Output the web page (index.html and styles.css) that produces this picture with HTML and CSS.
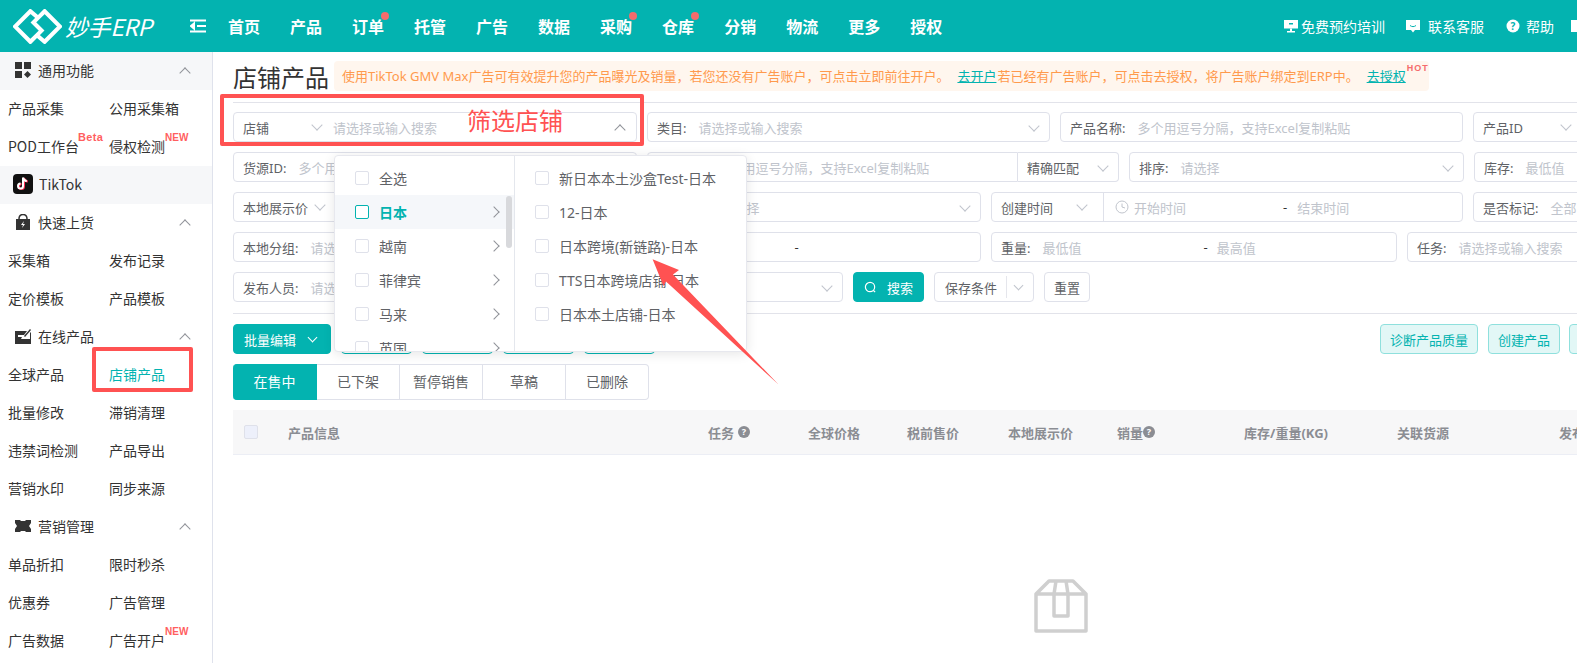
FILE: index.html
```html
<!DOCTYPE html>
<html lang="zh">
<head>
<meta charset="utf-8">
<title>店铺产品</title>
<link rel="stylesheet" href="styles.css">
</head>
<body>
<div class="app">
  <header class="topbar">
    <div class="logo">
      <svg class="logo-mark" viewBox="0 0 48 34"><path d="M24 8 17 2 2 17l15 15 11-11-5-5M24 26l7 6 15-15L31 2 20 13l5 5" fill="none" stroke="#fff" stroke-width="4"/></svg>
      <span class="logo-text">妙手ERP</span>
    </div>
    <svg class="fold" viewBox="0 0 16 14"><path d="M0 1.500h16M7 7h9M0 12.500h16M4 4.500 1 7l3 2.500z" stroke="#fff" stroke-width="2" fill="#fff"/></svg>
    <nav class="nav">
      <a>首页</a><a>产品</a><a class="dot">订单</a><a>托管</a><a>广告</a><a>数据</a><a class="dot">采购</a><a class="dot">仓库</a><a>分销</a><a>物流</a><a>更多</a><a>授权</a>
    </nav>
    <div class="top-links">
      <a class="l1"><svg class="ti" viewBox="0 0 14 14"><path d="M0 1h14v8.500H0z" fill="#fff"/><path d="M5 4h4v1.500H5z" fill="#03b3b0"/><path d="M6 9.500h2V12h3v1.500H3V12h3z" fill="#fff"/></svg>免费预约培训</a>
      <a class="l2"><svg class="ti" viewBox="0 0 14 14"><path d="M0 1h14v10H9l-2 2.500L5 11H0z" fill="#fff"/><path d="M4 6.500c2 1.500 4 1.500 6 0" stroke="#03b3b0" fill="none"/></svg>联系客服</a>
      <a class="l3"><svg class="ti" viewBox="0 0 14 14"><circle cx="7" cy="7" r="6.500" fill="#fff"/><text x="7" y="10.500" class="ti-q">?</text></svg>帮助</a>
      <a class="l4"><svg class="ti" viewBox="0 0 14 14"><path d="M0 1h14v12H0z" fill="#fff"/></svg></a>
    </div>
  </header>
  <div class="body">
    <aside class="side">
      <div class="sec gray"><svg class="si" viewBox="0 0 16 16"><path d="M0 0h7v7H0zM9 0h7v7H9zM0 9h7v7H0z" fill="#333"/><path d="m12.500 9 3.500 3.500-3.500 3.500L9 12.500z" fill="#333"/></svg><b>通用功能</b><i class="up"></i></div>
      <div class="grid"><a>产品采集</a><a>公用采集箱</a><a>POD工作台<em class="beta">Beta</em></a><a>侵权检测<em class="new">NEW</em></a></div>
      <div class="sec gray"><svg class="si tk" viewBox="0 0 20 20"><rect width="20" height="20" rx="4" fill="#111"/><path d="M11 4v8.500a2.500 2.500 0 1 1-2.500-2.500M11 4c.3 2 1.700 3.300 3.800 3.500" fill="none" stroke="#ff2d55" stroke-width="2"/><path d="M10 3.500V12a2.500 2.500 0 1 1-2.500-2.500M10 3.500c.3 2 1.700 3.300 3.800 3.500" fill="none" stroke="#fff" stroke-width="2"/></svg><b>TikTok</b></div>
      <div class="sec"><svg class="si" viewBox="0 0 16 16"><path d="M1 5h14v11H1z" fill="#333"/><path d="M4 5c0-6 8-6 8 0" fill="none" stroke="#333" stroke-width="1.500"/><path d="M9 7 6 11h2l-1 3 3-4H8z" fill="#fff"/></svg><b>快速上货</b><i class="up"></i></div>
      <div class="grid"><a>采集箱</a><a>发布记录</a><a>定价模板</a><a>产品模板</a></div>
      <div class="sec"><svg class="si" viewBox="0 0 16 16"><path d="M0 3h12L9 7H3v2h4l-1 2h9V5l1-1v12H0z" fill="#333"/><path d="m9 8 6-7 1 1-6 7z" fill="#333"/></svg><b>在线产品</b><i class="up"></i></div>
      <div class="grid"><a>全球产品</a><a class="on">店铺产品</a><a>批量修改</a><a>滞销清理</a><a>违禁词检测</a><a>产品导出</a><a>营销水印</a><a>同步来源</a></div>
      <div class="sec"><svg class="si" viewBox="0 0 16 12"><path d="M0 0h5l1 1h4l1-1h5v3l-2 3 2 3v3h-5l-1-1H6l-1 1H0V9l2-3-2-3z" fill="#333"/></svg><b>营销管理</b><i class="up"></i></div>
      <div class="grid"><a>单品折扣</a><a>限时秒杀</a><a>优惠券</a><a>广告管理</a><a>广告数据</a><a>广告开户<em class="new">NEW</em></a></div>
    </aside>
    <main class="main">
      <div class="head">
        <h1>店铺产品</h1>
        <div class="notice">使用TikTok GMV Max广告可有效提升您的产品曝光及销量，若您还没有广告账户，可点击立即前往开户。<a>去开户</a><span class="n2">若已经有广告账户，可点击去授权，将广告账户绑定到ERP中。</span><a>去授权<em class="hot">HOT</em></a></div>
      </div>
      <div class="filters">
        <div class="row">
          <div class="f w404"><span class="lb">店铺</span><i class="dn at83"></i><span class="ph at101">请选择或输入搜索</span><i class="up end"></i></div>
          <div class="f w403"><span class="lb">类目:</span><span class="ph">请选择或输入搜索</span><i class="dn end"></i></div>
          <div class="f w403"><span class="lb">产品名称:</span><span class="ph">多个用逗号分隔，支持Excel复制粘贴</span></div>
          <div class="f w200"><span class="lb">产品ID</span><i class="dn at83 idc"></i></div>
        </div>
        <div class="row">
          <div class="f w404"><span class="lb">货源ID:</span><span class="ph">多个用逗号分隔，支持Excel复制粘贴</span></div>
          <div class="f w370"><span class="lb wide2">SKU ID:</span><span class="ph">多个用逗号分隔，支持Excel复制粘贴</span></div>
          <div class="f joined w101"><span class="lb">精确匹配</span><i class="dn end"></i></div>
          <div class="f w335"><span class="lb">排序:</span><span class="ph">请选择</span><i class="dn end"></i></div>
          <div class="f w200"><span class="lb">库存:</span><span class="ph">最低值</span></div>
        </div>
        <div class="row">
          <div class="f w404"><span class="lb">本地展示价</span><i class="dn at83 thin"></i></div>
          <div class="f w333"><span class="lb wide9">负责人:</span><span class="ph">请选择</span><i class="dn end"></i></div>
          <div class="f w472"><span class="lb">创建时间</span><i class="dn at83 tm"></i><span class="vr"></span><svg class="clock" viewBox="0 0 14 14"><circle cx="7" cy="7" r="6" fill="none" stroke="#c0c4cc"/><path d="M7 3.500V7l3 1" fill="none" stroke="#c0c4cc"/></svg><span class="ph">开始时间</span><span class="dash d1">-</span><span class="ph">结束时间</span></div>
          <div class="f w200"><span class="lb">是否标记:</span><span class="ph">全部</span></div>
        </div>
        <div class="row">
          <div class="f w404"><span class="lb">本地分组:</span><span class="ph">请选择</span></div>
          <div class="f w333"><span class="lb">价格:</span><span class="ph">最低值</span><span class="dash d2">-</span></div>
          <div class="f w406"><span class="lb">重量:</span><span class="ph">最低值</span><span class="dash d3">-</span><span class="ph">最高值</span></div>
          <div class="f w300"><span class="lb">任务:</span><span class="ph">请选择或输入搜索</span></div>
        </div>
        <div class="row">
          <div class="f w404"><span class="lb">发布人员:</span><span class="ph">请选择</span></div>
          <div class="f w196"><span class="lb">来源:</span><i class="dn end"></i></div>
          <button class="btn pri search"><svg class="sic" viewBox="0 0 14 14"><circle cx="6.500" cy="6.500" r="5" fill="none" stroke="#fff" stroke-width="1.300"/><path d="m10 10 2 2" stroke="#fff" stroke-width="1.300"/></svg>搜索</button>
          <button class="btn save">保存条件<span class="vr2"></span><i class="dn small"></i></button>
          <button class="btn reset">重置</button>
        </div>
      </div>
      <div class="toolbar">
        <button class="btn pri batch">批量编辑<i class="dn white"></i></button>
        <button class="btn t1">批量上架</button><button class="btn t1">批量下架</button><button class="btn t1">批量删除</button><button class="btn t1">批量同步</button>
        <span class="spring"></span>
        <button class="btn tint">诊断产品质量</button>
        <button class="btn tint">创建产品</button>
        <button class="btn tint">同步产品</button>
      </div>
      <div class="tabs"><a class="act">在售中</a><a>已下架</a><a>暂停销售</a><a>草稿</a><a>已删除</a></div>
      <div class="thead">
        <span class="cb c0"></span>
        <span class="c c1">产品信息</span>
        <span class="c c2">任务<i class="q"></i></span>
        <span class="c c3">全球价格</span>
        <span class="c c4">税前售价</span>
        <span class="c c5">本地展示价</span>
        <span class="c c6">销量<i class="q n"></i></span>
        <span class="c c7">库存/重量(KG)</span>
        <span class="c c8">关联货源</span>
        <span class="c c9">发布时间</span>
      </div>
      <div class="empty"><svg viewBox="0 0 54 54" class="box"><path d="M2 15 15 2h24l13 13v37H2zM2 15h50M22 2l-2 13v22h14V15L32 2" fill="none" stroke="#cfcfcf" stroke-width="3.500" stroke-linejoin="round"/></svg></div>

      <div class="drop">
        <div class="dcol left">
          <div class="di"><span class="cb"></span>全选</div>
          <div class="di act"><span class="cb teal"></span>日本<i class="rt"></i></div>
          <div class="di"><span class="cb"></span>越南<i class="rt"></i></div>
          <div class="di"><span class="cb"></span>菲律宾<i class="rt"></i></div>
          <div class="di"><span class="cb"></span>马来<i class="rt"></i></div>
          <div class="di"><span class="cb"></span>英国<i class="rt"></i></div>
          <span class="thumb"></span>
        </div>
        <div class="dcol">
          <div class="di"><span class="cb"></span>新日本本土沙盒Test-日本</div>
          <div class="di"><span class="cb"></span>12-日本</div>
          <div class="di"><span class="cb"></span>日本跨境(新链路)-日本</div>
          <div class="di"><span class="cb"></span>TTS日本跨境店铺-日本</div>
          <div class="di"><span class="cb"></span>日本本土店铺-日本</div>
        </div>
      </div>
    </main>
  </div>
</div>
<div class="mark m1"><span>筛选店铺</span></div>
<div class="mark m2"></div>
<svg class="arrow" viewBox="0 0 130 130"><path d="M2.600 2.300 29 13 23 17.500 128.500 127.500 16 24.500 13.500 29z" fill="#ff5252"/></svg>
</body>
</html>
```

FILE: styles.css
```css
* { box-sizing: border-box; }
html, body { margin: 0; height: 100%; overflow: hidden; background: #fff; }
body { font-family: "Noto Sans", "Noto Sans CJK SC", sans-serif; font-size: 13px; color: #606266; position: relative; }
i, em { font-style: normal; }
.app { width: 1577px; height: 663px; display: flex; flex-direction: column; }

.topbar { height: 52px; flex: none; background: #03b3b0; color: #fff; display: flex; align-items: center; padding-left: 13px; }
.logo { display: flex; align-items: center; width: 177px; flex: none; }
.logo-mark { width: 49px; height: 35px; flex: none; }
.logo-text { font-size: 23px; font-style: italic; font-family: "Noto Sans CJK SC", sans-serif; font-weight: 400; margin-left: 3px; line-height: 1; white-space: nowrap; letter-spacing: -.4px; }
.fold { width: 16px; height: 14px; flex: none; }
.nav { display: flex; margin-left: 22px; font-size: 16px; font-weight: 700; }
.nav a { margin-right: 30px; position: relative; line-height: 22px; font-family: "Noto Sans CJK SC", sans-serif; white-space: nowrap; }
.nav a.dot::after { content: ""; position: absolute; width: 8px; height: 8px; border-radius: 50%; background: #f56c6c; right: -5px; top: -3px; }
.top-links { margin-left: auto; display: flex; align-items: center; font-size: 14px; white-space: nowrap; }
.top-links a { display: flex; align-items: center; }
.ti { width: 14px; height: 14px; flex: none; }
.ti-q { font-size: 10px; font-weight: 700; fill: #03b3b0; text-anchor: middle; }
.l1 .ti { margin-right: 3px; }
.l2 { margin-left: 21px; }
.l2 .ti { margin-right: 8px; }
.l3 { margin-left: 22px; }
.l3 .ti { margin-right: 6px; }
.l4 { margin-left: 17px; margin-right: -8px; }

.body { flex: 1; display: flex; min-height: 0; }
.side { width: 213px; flex: none; border-right: 1px solid #dfe2ec; background: #fff; overflow: hidden; color: #333; font-size: 14px; }
.sec { height: 38px; display: flex; align-items: center; padding: 0 0 2px 15px; font-family: "Noto Sans CJK SC", sans-serif; color: #333; }
.sec.gray { background: #f6f7f9; }
.sec b { font-weight: 400; margin-left: 7px; }
.si { width: 16px; height: 16px; flex: none; }
.si.tk { width: 20px; height: 20px; margin-left: -2px; margin-right: -1px; }
.up, .dn { display: block; width: 8px; height: 8px; border-left: 1px solid #909399; border-top: 1px solid #909399; transform: rotate(45deg); flex: none; }
.dn { transform: rotate(225deg); border-color: #c0c4cc; }
.sec .up { margin-left: auto; margin-right: 23px; margin-top: 6px; }
.grid { display: grid; grid-template-columns: 101px 101px; padding-left: 8px; }
.grid a { height: 38px; line-height: 36px; position: relative; white-space: nowrap; font-family: "Noto Sans CJK SC", sans-serif; justify-self: start; }
.grid a.on { color: #03b3b0; }
.beta, .new { position: absolute; color: #ff5f5f; font-weight: 700; left: 100%; line-height: 1; white-space: nowrap; font-family: "Liberation Sans", sans-serif; }
.beta { font-size: 11px; top: 4px; margin-left: -1px; letter-spacing: .4px; }
.new { font-size: 10px; top: 5px; }

.main { flex: 1; min-width: 0; padding-left: 20px; position: relative; overflow: hidden; }
.head { height: 51px; display: flex; align-items: center; border-bottom: 1px solid #e2e3ea; white-space: nowrap; margin-bottom: 9px; }
.head h1 { font-size: 24px; font-weight: 400; margin: 0; color: #333; line-height: 28px; width: 101px; flex: none; font-family: "Noto Sans CJK SC", sans-serif; }
.notice { height: 30px; line-height: 30px; background: #fff6ee; color: #ff9a4d; border-radius: 4px; padding: 0 23px 0 8px; font-size: 13px; width: 1095px; flex: none; position: relative; top: -1px; }
.notice a { color: #03b3b0; text-decoration: underline; margin-left: 8px; position: relative; }
.n2 { margin-left: 1px; }
.hot { position: absolute; left: 100%; top: -3px; font-size: 9px; line-height: 1; font-weight: 700; color: #f56c6c; margin-left: 1px; display: inline-block; font-family: "Liberation Sans", sans-serif; letter-spacing: 1px; }

.filters { border-bottom: 1px solid #e2e3ea; padding-bottom: 11px; display: flex; flex-direction: column; gap: 10px; }
.row { display: flex; gap: 10px; height: 30px; white-space: nowrap; }
.f { height: 30px; border: 1px solid #dfe1ea; border-radius: 4px; display: flex; align-items: center; padding: 0 9px; flex: none; background: #fff; position: relative; overflow: hidden; }
.lb { color: #606266; margin-right: 12px; }
.wide2 { margin-right: 14px; }
.wide9 { margin-right: 21px; }
.ph { color: #c0c4cc; }
.end { margin-left: auto; margin-right: 2px; margin-top: -2px; }
.up.end { margin-top: 5px; margin-right: 3px; }
.at83 { position: absolute; left: 79px; top: 8px; }
.at83.thin { left: 82px; }
.at83.tm { left: 86px; }
.at83.idc { left: 88px; }
.at101 { margin-left: 52px; }
.w404 { width: 404px; } .w403 { width: 403px; } .w200 { width: 200px; }
.w370 { width: 371px; border-radius: 4px 0 0 4px; }
.joined { margin-left: -10px; border-left: 0; border-radius: 0 4px 4px 0; }
.w101 { width: 101px; }
.w335 { width: 335px; }
.w333 { width: 334px; }
.w472 { width: 472px; }
.w406 { width: 406px; }
.w300 { width: 300px; }
.w196 { width: 196px; }
.vr { width: 1px; height: 28px; background: #dfe1ea; position: absolute; left: 111px; top: 0; }
.clock { width: 14px; height: 14px; margin-left: 50px; margin-right: 5px; flex: none; }
.dash { color: #333; }
.d1 { margin-left: 97px; margin-right: 10px; }
.d2 { margin-left: 57px; }
.d3 { margin-left: 122px; margin-right: 9px; }

.btn { font: inherit; height: 30px; border: 1px solid #dfe1ea; border-radius: 4px; background: #fff; color: #606266; padding: 0 10px; display: flex; align-items: center; flex: none; white-space: nowrap; }
.pri { background: #03b3b0; border-color: #03b3b0; color: #fff; }
.search { width: 71px; justify-content: center; }
.sic { width: 15px; height: 15px; margin-right: 10px; }
.save { width: 100px; }
.vr2 { width: 1px; height: 22px; background: #e5e6ec; margin-left: 9px; }
.dn.small { margin-left: 8px; width: 7px; height: 7px; margin-top: -3px; }
.reset { width: 46px; justify-content: center; }
.toolbar { display: flex; gap: 10px; height: 30px; margin-top: 10px; white-space: nowrap; overflow: hidden; }
.batch { width: 98px; padding-left: 10px; }
.dn.white { border-color: #fff; margin-left: 13px; margin-top: -4px; width: 7px; height: 7px; }
.tint { background: #e2f7f6; border-color: #8fe0dd; color: #03b3b0; }
.t1 { width: 71px; background: #fff; border-color: #03b3b0; color: #03b3b0; }
.spring { flex: none; width: 705px; }
.tint:nth-last-child(3) { width: 98px; justify-content: center; padding: 0; }
.tint:nth-last-child(2) { width: 72px; justify-content: center; padding: 0; margin-right: -1px; }
.tabs { display: flex; margin-top: 10px; height: 36px; font-size: 14px; width: 416px; }
.tabs a { border: 1px solid #dfe1ea; border-left: 0; width: 83px; line-height: 34px; text-align: center; color: #606266; flex: none; }
.tabs a:last-child { border-radius: 0 4px 4px 0; }
.tabs a.act { background: #03b3b0; color: #fff; border-color: #03b3b0; border-radius: 4px 0 0 4px; width: 84px; }
.thead { margin-top: 10px; height: 45px; background: #f7f7f8; border-bottom: 1px solid #eceef5; position: relative; display: flex; align-items: center; font-weight: 700; color: #8b8d93; font-size: 13px; white-space: nowrap; }
.cb { width: 14px; height: 14px; border: 1px solid #dfe1ea; border-radius: 2px; background: #fff; display: inline-block; flex: none; }
.c0 { background: #edf0fb; margin-left: 11px; }
.c { flex: none; }
.c1 { margin-left: 30px; width: 420px; }
.c2 { width: 100px; display: flex; align-items: center; }
.c3 { width: 99px; }
.c4 { width: 101px; }
.c5 { width: 109px; }
.c6 { width: 127px; display: flex; align-items: center; }
.c7 { width: 153px; }
.c8 { width: 162px; }
.q { width: 12px; height: 12px; border-radius: 50%; background: #8b8d93; margin-left: 4px; color: #fff; font-size: 9px; line-height: 12px; text-align: center; display: block; }
.q::after { content: "?"; }
.q.n { margin-left: 0; }
.empty { display: flex; justify-content: center; padding-top: 124px; padding-left: 312px; }
.box { width: 54px; height: 54px; }

.drop { position: absolute; left: 121px; top: 103px; width: 413px; height: 197px; background: #fff; border: 1px solid #e7e8ee; border-radius: 4px; box-shadow: 0 2px 12px rgba(0,0,0,.1); display: flex; overflow: hidden; z-index: 3; font-size: 14px; color: #606266; }
.dcol { padding-top: 5px; flex: 1; position: relative; }
.dcol.left { flex: none; width: 180px; border-right: 1px solid #e4e7ed; }
.di { height: 34px; display: flex; align-items: center; padding-left: 20px; position: relative; white-space: nowrap; }
.left .di { padding-left: 20px; }
.left .di.act { background: #f5f7fa; color: #03b3b0; font-weight: 700; }
.di .cb { margin-right: 10px; }
.cb.teal { border-color: #03b3b0; }
.rt { position: absolute; left: 155px; top: 13px; width: 8px; height: 8px; border-top: 1px solid #909399; border-right: 1px solid #909399; transform: rotate(45deg); }
.thumb { position: absolute; left: 171px; top: 40px; width: 6px; height: 52px; border-radius: 3px; background: #d8d9dc; }

.mark { position: absolute; border: 4px solid #ff5252; border-radius: 2px; z-index: 5; }
.m1 { left: 220px; top: 94px; width: 424px; height: 52px; color: #ff5252; font-size: 24px; line-height: 44px; padding-left: 243px; font-family: "Noto Sans CJK SC", sans-serif; }
.m2 { left: 92px; top: 347px; width: 101px; height: 45px; }
.arrow { position: absolute; left: 650px; top: 257px; width: 130px; height: 130px; z-index: 6; }
```
